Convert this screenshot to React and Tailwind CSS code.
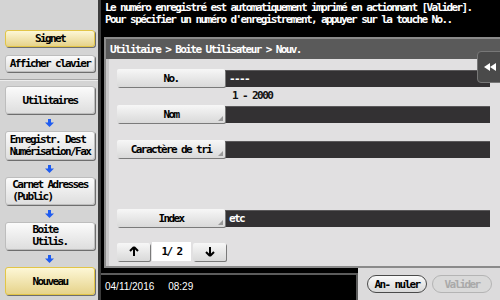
import React from 'react';

const mono = { fontFamily: '"DejaVu Sans Mono", monospace' };

// small blue arrow between steps of the sidebar
const StepArrow = () => (
  <div className="h-[17px] flex items-center justify-center">
    <svg width="9" height="8" viewBox="0 0 9 8">
      <rect x="3" y="0" width="3" height="4" fill="#1f5cf0" />
      <polygon points="0,3.5 9,3.5 4.5,8" fill="#1f5cf0" />
    </svg>
  </div>
);

const SideButton = ({ children, yellow, className = '' }) => (
  <div
    className={`ml-[5px] mr-[3px] rounded-[3px] border flex items-center justify-center text-black shadow-[1px_1px_0_#6e6e6e] ${
      yellow
        ? 'bg-gradient-to-b from-[#fdf7d6] to-[#e6d38a] border-[#e2c547]'
        : 'bg-gradient-to-b from-[#fbfbfb] to-[#dedede] border-[#bdbdbd]'
    } ${className}`}
  >
    {children}
  </div>
);

// corner mark on buttons that open a sub screen
const Corner = () => (
  <svg className="absolute right-[2px] bottom-[2px]" width="5" height="5" viewBox="0 0 5 5">
    <polygon points="5,0 5,5 0,5" fill="#9a9a9a" />
  </svg>
);

const FieldButton = ({ label, corner }) => (
  <div className="relative w-[108px] h-[18px] rounded-[2px] bg-gradient-to-b from-[#f7f7f7] to-[#d9d9d9] shadow-[1px_1px_0_#7a7a7a] flex items-center justify-center text-black">
    {label}
    {corner && <Corner />}
  </div>
);

const Field = ({ value }) => (
  <div className="flex-1 h-[17px] bg-[#333133] border-t border-[#5a585a] flex items-center pl-[4px] text-white">
    {value}
  </div>
);

const Row = ({ label, value, corner, className = '' }) => (
  <div className={`flex items-center ml-[8px] mr-[10px] ${className}`}>
    <FieldButton label={label} corner={corner} />
    <Field value={value} />
  </div>
);

const PagerButton = ({ up }) => (
  <div className="w-[33px] h-[18px] rounded-[2px] bg-gradient-to-b from-[#f7f7f7] to-[#d9d9d9] shadow-[1px_1px_0_#7a7a7a] flex items-center justify-center">
    <svg width="10" height="11" viewBox="0 0 10 11">
      {up ? (
        <path d="M5 1 L1 5 M5 1 L9 5 M5 1 L5 10" stroke="#000" strokeWidth="2" fill="none" />
      ) : (
        <path d="M5 10 L1 6 M5 10 L9 6 M5 10 L5 1" stroke="#000" strokeWidth="2" fill="none" />
      )}
    </svg>
  </div>
);

const App = () => {
  return (
    <div
      className="relative w-[500px] h-[300px] flex overflow-hidden bg-black text-[11px] font-bold tracking-[-1.6px] leading-[11px]"
      style={mono}
    >
      {/* left sidebar */}
      <div className="w-[101px] h-full bg-[#d4d4d4] border-r-[3px] border-[#3c3c3c] flex flex-col">
        <div className="pt-[30px] pb-[7px] border-b border-[#a5a5a5]">
          <SideButton yellow className="h-[17px]">Signet</SideButton>
          <SideButton className="h-[17px] mt-[8px]">Afficher clavier</SideButton>
        </div>
        <div className="pt-[5px] border-t border-[#ececec]">
          <SideButton className="h-[28px]">Utilitaires</SideButton>
          <StepArrow />
          <SideButton className="h-[29px]">
            <span className="text-left leading-[12px]">Enregistr. Dest<br />Numérisation/Fax</span>
          </SideButton>
          <StepArrow />
          <SideButton className="h-[28px]">
            <span className="text-left leading-[12px]">Carnet Adresses<br />(Public)</span>
          </SideButton>
          <StepArrow />
          <SideButton className="h-[28px]">
            <span className="text-left leading-[12px]">Boite<br />Utilis.</span>
          </SideButton>
          <StepArrow />
          <SideButton yellow className="h-[28px]">Nouveau</SideButton>
        </div>
      </div>

      {/* main area */}
      <div className="flex-1 flex flex-col">
        <div className="h-[37px] pl-[4px] pt-[2px] text-white leading-[12px]">
          <div>Le numéro enregistré est automatiquement imprimé en actionnant [Valider].</div>
          <div>Pour spécifier un numéro d'enregistrement, appuyer sur la touche No..</div>
        </div>

        <div className="ml-[3px] h-[231px] border-2 border-r-0 border-[#8a8a8a] flex flex-col">
          <div className="h-[20px] bg-[#5a5a5a] text-white flex items-center pl-[4px]">
            Utilitaire &gt; Boite Utilisateur &gt; Nouv.
          </div>
          <div className="flex-1 bg-[#e1e0e1] border-l-[3px] border-[#c9c8c9] flex flex-col">
            <Row label="No." value="----" className="mt-[10px]" />
            <div className="ml-[123px] mt-[3px] h-[12px] text-[#111]">1 - 2000</div>
            <Row label="Nom" corner className="mt-[3px]" />
            <Row label="Caractère de tri" corner className="mt-[17px]" />
            <Row label="Index" value="etc" corner className="mt-[51px]" />
            <div className="flex items-center gap-[2px] ml-[8px] mt-[15px]">
              <PagerButton up />
              <div className="w-[39px] h-[19px] bg-white flex items-center justify-center text-black">1/ 2</div>
              <PagerButton />
            </div>
          </div>
        </div>

        <div className="flex-1 flex">
          <div className="w-[257px] border-t-2 border-r-2 border-[#5c5c5c] mt-[5px] flex items-center pl-[4px] pb-[2px]">
            <span
              className="text-white text-[10px] font-normal tracking-normal"
              style={{ fontFamily: '"Liberation Sans", Arial, sans-serif' }}
            >
              04/11/2016&nbsp;&nbsp;&nbsp;&nbsp;&nbsp;08:29
            </span>
          </div>
          <div className="flex-1 bg-[#dcdbdc] flex items-center gap-[5px] pl-[9px]">
            <div className="w-[60px] h-[18px] rounded-full border-[1.5px] border-[#4a4a4a] bg-gradient-to-b from-[#fafafa] to-[#d8d8d8] flex items-center justify-center text-black">
              An- nuler
            </div>
            <div className="w-[60px] h-[18px] rounded-full border-[1.5px] border-[#b4b4b4] bg-[#d9d9d9] flex items-center justify-center text-[#a9a9a9]">
              Valider
            </div>
          </div>
        </div>
      </div>

      {/* collapse tab over the right edge */}
      <div className="absolute left-[477px] top-[51px] w-[26px] h-[32px] rounded-l-[4px] bg-[#4a4a4a] border border-[#777] flex items-center justify-center">
        <svg width="12" height="8" viewBox="0 0 12 8">
          <polygon points="0,4 6,0 6,8" fill="#fff" />
          <polygon points="6,4 12,0 12,8" fill="#fff" />
        </svg>
      </div>
    </div>
  );
};

export default App;
